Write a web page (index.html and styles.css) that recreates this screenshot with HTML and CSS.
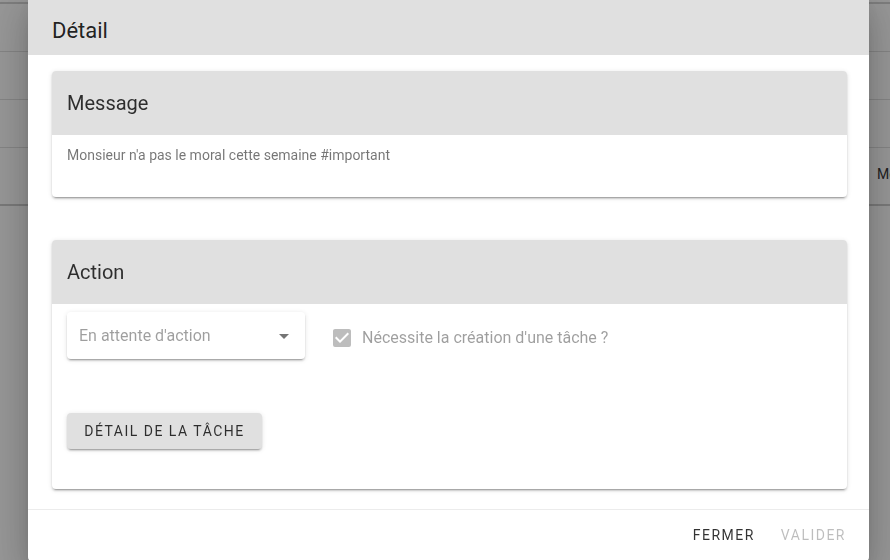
FILE: index.html
```html
<!DOCTYPE html>
<html lang="fr">
<head>
    <meta charset="UTF-8">
    <meta name="viewport" content="width=device-width, initial-scale=1.0">
    <title>Détail</title>
    <link rel="stylesheet" href="styles.css">
</head>
<body>
    <div class="page">
        <div class="row row-top"></div>
        <div class="row"></div>
        <div class="row"></div>
        <div class="row"></div>
        <div class="row row-tall"><span class="row-text">Mo</span></div>
    </div>

    <div class="scrim"></div>

    <div class="dialog">
        <div class="dialog-title">Détail</div>

        <div class="dialog-body">
            <div class="card">
                <div class="card-title">Message</div>
                <div class="card-text message-text">Monsieur n'a pas le moral cette semaine #important</div>
            </div>

            <div class="card card-action">
                <div class="card-title">Action</div>
                <div class="card-text action-body">
                    <div class="action-line">
                        <div class="select">
                            <span class="select-value">En attente d'action</span>
                            <span class="select-arrow"></span>
                        </div>
                        <label class="checkbox">
                            <svg class="checkbox-icon" viewBox="0 0 24 24" width="24" height="24">
                                <path d="M10,17L5,12L6.41,10.58L10,14.17L17.59,6.58L19,8M19,3H5C3.89,3 3,3.89 3,5V19A2,2 0 0,0 5,21H19A2,2 0 0,0 21,19V5C21,3.89 20.1,3 19,3Z"/>
                            </svg>
                            <span class="checkbox-label">Nécessite la création d'une tâche ?</span>
                        </label>
                    </div>
                    <button class="btn btn-raised">Détail de la tâche</button>
                </div>
            </div>
        </div>

        <div class="dialog-actions">
            <button class="btn btn-text">Fermer</button>
            <button class="btn btn-text btn-disabled">Valider</button>
        </div>
    </div>
</body>
</html>
```

FILE: styles.css
```css
html, body {
    margin: 0;
    padding: 0;
    height: 100%;
    overflow: hidden;
}
body {
    font-family: Roboto, "Liberation Sans", Arial, sans-serif;
    background-color: #fff;
}

/* page behind the dialog */
.page {
    background: #fff;
    height: 100%;
}
.row {
    height: 47px;
    border-bottom: 1px solid #dcdcdc;
    position: relative;
}
.row-top {
    height: 2px;
    border-bottom: 2px solid #cfcfcf;
}
.row-tall {
    height: 56px;
    border-bottom: 2px solid #c8c8c8;
}
.row-text {
    position: absolute;
    left: 877px;
    top: 18px;
    font-size: 14px;
    color: #222;
}
.scrim {
    position: fixed;
    inset: 0;
    background: rgba(33, 33, 33, 0.46);
}

/* dialog */
.dialog {
    position: fixed;
    left: 28px;
    top: -9px;
    width: 841px;
    background: #fff;
    border-radius: 4px;
    overflow: hidden;
    box-shadow: 0 11px 15px -7px rgba(0, 0, 0, 0.2), 0 24px 38px 3px rgba(0, 0, 0, 0.14), 0 9px 46px 8px rgba(0, 0, 0, 0.12);
}
.dialog-title {
    background: #e0e0e0;
    height: 64px;
    box-sizing: border-box;
    padding: 24px 24px 0;
    font-size: 22px;
    line-height: 32px;
    color: rgba(0, 0, 0, 0.87);
}
.dialog-body {
    padding: 16px 22px 20px 24px;
    display: flex;
    flex-direction: column;
    gap: 43px;
}
.card {
    background: #fff;
    border-radius: 4px;
    overflow: hidden;
    box-shadow: 0 3px 1px -2px rgba(0, 0, 0, 0.2), 0 2px 2px 0 rgba(0, 0, 0, 0.14), 0 1px 5px 0 rgba(0, 0, 0, 0.12);
}
.card-title {
    background: #e0e0e0;
    height: 64px;
    box-sizing: border-box;
    padding: 16px 15px;
    font-size: 20px;
    line-height: 32px;
    color: rgba(0, 0, 0, 0.8);
}
.card-text {
    padding: 10px 15px;
}
.message-text {
    height: 62px;
    box-sizing: border-box;
    padding-top: 10px;
    font-size: 14px;
    line-height: 20px;
    color: rgba(0, 0, 0, 0.54);
}
.action-body {
    height: 185px;
    box-sizing: border-box;
    padding: 8px 15px;
    display: flex;
    flex-direction: column;
    align-items: flex-start;
    gap: 54px;
}
.action-line {
    display: flex;
    align-items: center;
    gap: 25px;
}
.select {
    width: 238px;
    height: 47px;
    box-sizing: border-box;
    padding: 0 16px 0 12px;
    display: flex;
    align-items: center;
    justify-content: space-between;
    border-radius: 4px;
    box-shadow: 0 3px 1px -2px rgba(0, 0, 0, 0.2), 0 2px 2px 0 rgba(0, 0, 0, 0.14), 0 1px 5px 0 rgba(0, 0, 0, 0.12);
}
.select-value {
    font-size: 16px;
    color: rgba(0, 0, 0, 0.38);
}
.select-arrow {
    width: 0;
    height: 0;
    border-left: 5px solid transparent;
    border-right: 5px solid transparent;
    border-top: 5px solid rgba(0, 0, 0, 0.54);
    margin-top: 2px;
}
.checkbox {
    display: flex;
    align-items: center;
    gap: 8px;
    margin-top: 4px;
}
.checkbox-icon {
    fill: rgba(0, 0, 0, 0.26);
}
.checkbox-label {
    font-size: 16px;
    color: rgba(0, 0, 0, 0.38);
}

/* buttons */
.btn {
    font-family: inherit;
    font-size: 14px;
    font-weight: 400;
    letter-spacing: 1.5px;
    text-transform: uppercase;
    height: 36px;
    border: 0;
    border-radius: 4px;
    background: transparent;
    color: rgba(0, 0, 0, 0.8);
    cursor: pointer;
}
.btn-raised {
    background: #e0e0e0;
    padding: 0 16px;
    width: 195px;
    box-shadow: 0 3px 1px -2px rgba(0, 0, 0, 0.2), 0 2px 2px 0 rgba(0, 0, 0, 0.14), 0 1px 5px 0 rgba(0, 0, 0, 0.12);
}
.btn-text {
    padding: 0 10px;
}
.btn-disabled {
    color: rgba(0, 0, 0, 0.26);
}
.dialog-actions {
    border-top: 1px solid #ececec;
    padding: 7px 13px 8px 8px;
    display: flex;
    justify-content: flex-end;
    gap: 6px;
}
```
